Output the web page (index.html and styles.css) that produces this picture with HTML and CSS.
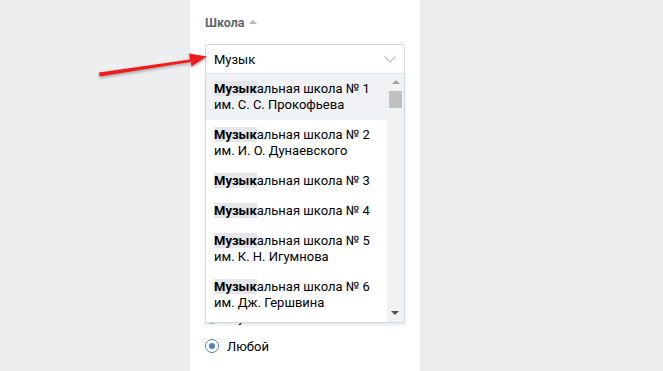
FILE: index.html
```html
<!DOCTYPE html>
<html lang="ru">
<head>
    <meta charset="UTF-8">
    <title>Поиск людей</title>
    <link rel="stylesheet" href="styles.css">
</head>
<body>
    <div class="page">
        <div class="side"></div>
        <div class="panel">
            <div class="label">Школа <span class="caret-up"></span></div>

            <div class="select">
                <div class="select-input">
                    <span>Музык</span>
                    <svg class="chevron" width="12" height="7" viewBox="0 0 12 7"><path d="M0.5 0.5 L6 6 L11.5 0.5" fill="none" stroke="#b8bfc7" stroke-width="1.2"/></svg>
                </div>
                <div class="dropdown">
                    <ul class="list">
                        <li class="item active"><b>Музык</b>альная школа № 1<br>им. С. С. Прокофьева</li>
                        <li class="item"><b>Музык</b>альная школа № 2<br>им. И. О. Дунаевского</li>
                        <li class="item"><b>Музык</b>альная школа № 3</li>
                        <li class="item"><b>Музык</b>альная школа № 4</li>
                        <li class="item"><b>Музык</b>альная школа № 5<br>им. К. Н. Игумнова</li>
                        <li class="item"><b>Музык</b>альная школа № 6<br>им. Дж. Гершвина</li>
                    </ul>
                    <div class="scrollbar">
                        <span class="sb-up"></span>
                        <span class="sb-thumb"></span>
                        <span class="sb-down"></span>
                    </div>
                </div>
            </div>

            <div class="radios">
                <div class="radio"><span class="dot"></span>Мужской</div>
                <div class="radio checked"><span class="dot"></span>Любой</div>
            </div>
        </div>
        <div class="side"></div>
    </div>

    <!-- стрелка поверх страницы -->
    <svg class="arrow" width="663" height="371" viewBox="0 0 663 371">
        <defs>
            <filter id="sh" x="-20%" y="-50%" width="140%" height="200%">
                <feDropShadow dx="0" dy="1.5" stdDeviation="1.5" flood-color="#000" flood-opacity="0.35"/>
            </filter>
        </defs>
        <g filter="url(#sh)" fill="#ee1c1c">
            <path d="M99 72.5 L190 59.5 L189 53.5 L207 56.5 L191.5 66.5 L190.8 62 L99.6 76.6 Z"/>
        </g>
    </svg>
</body>
</html>
```

FILE: styles.css
```css
body {
    margin: 0;
    background-color: #edeef0;
    font-family: Roboto, "Open Sans", "DejaVu Sans", sans-serif;
    font-size: 13px;
    color: #000;
}
.page {
    display: flex;
    height: 371px;
    overflow: hidden;
}
.side {
    width: 190px;
}
.panel {
    width: 200px;
    padding: 15px 15px 0 15px;
    background-color: #fff;
}
.label {
    color: #5f6670;
    font-weight: 700;
    font-size: 12.5px;
    height: 16px;
    line-height: 16px;
    margin-bottom: 13px;
}
.caret-up {
    display: inline-block;
    width: 0;
    height: 0;
    border-left: 4px solid transparent;
    border-right: 4px solid transparent;
    border-bottom: 4px solid #b2b8bf;
    vertical-align: 3px;
    margin-left: 1px;
}
.select {
    position: relative;
}
.select-input {
    height: 28px;
    border: 1px solid #d3d9de;
    border-radius: 3px 3px 0 0;
    display: flex;
    align-items: center;
    justify-content: space-between;
    padding: 0 8px 0 8px;
}
.chevron {
    margin-top: 1px;
}
.dropdown {
    position: absolute;
    top: 29px;
    left: 0;
    width: 198px;
    height: 248px;
    border: 1px solid #d3d9de;
    border-top: 1px solid #e1e5eb;
    background: #fff;
    box-shadow: 0 2px 3px rgba(0, 0, 0, 0.1);
    display: flex;
    z-index: 2;
}
.list {
    list-style: none;
    margin: 0;
    padding: 0;
    flex: 1;
    overflow: hidden;
}
.item {
    padding: 7px 8px;
    line-height: 16px;
    white-space: nowrap;
}
.item.active {
    background-color: #f0f2f5;
}
.item b {
    font-weight: 700;
    background-color: #e4e6ea;
}
.scrollbar {
    width: 17px;
    background-color: #f1f2f4;
    display: flex;
    flex-direction: column;
    align-items: center;
    padding-top: 6px;
    position: relative;
}
.sb-up {
    width: 0;
    height: 0;
    border-left: 4px solid transparent;
    border-right: 4px solid transparent;
    border-bottom: 4px solid #a3a3a3;
}
.sb-thumb {
    width: 13px;
    height: 17px;
    background-color: #c1c1c1;
    margin-top: 7px;
}
.sb-down {
    position: absolute;
    bottom: 7px;
    left: 4px;
    width: 0;
    height: 0;
    border-left: 4px solid transparent;
    border-right: 4px solid transparent;
    border-top: 4px solid #505050;
}
.radios {
    margin-top: 230px;
    display: flex;
    flex-direction: column;
    gap: 3px;
}
.radio {
    display: flex;
    align-items: center;
    height: 26px;
}
.dot {
    width: 12px;
    height: 12px;
    border: 1px solid #b8c1ca;
    border-radius: 50%;
    margin-right: 8px;
    box-sizing: content-box;
    position: relative;
}
.radio.checked .dot {
    border-color: #5181b8;
}
.radio.checked .dot::after {
    content: "";
    position: absolute;
    left: 3px;
    top: 3px;
    width: 6px;
    height: 6px;
    border-radius: 50%;
    background-color: #5181b8;
}
.arrow {
    position: absolute;
    left: 0;
    top: 0;
    pointer-events: none;
}
```
